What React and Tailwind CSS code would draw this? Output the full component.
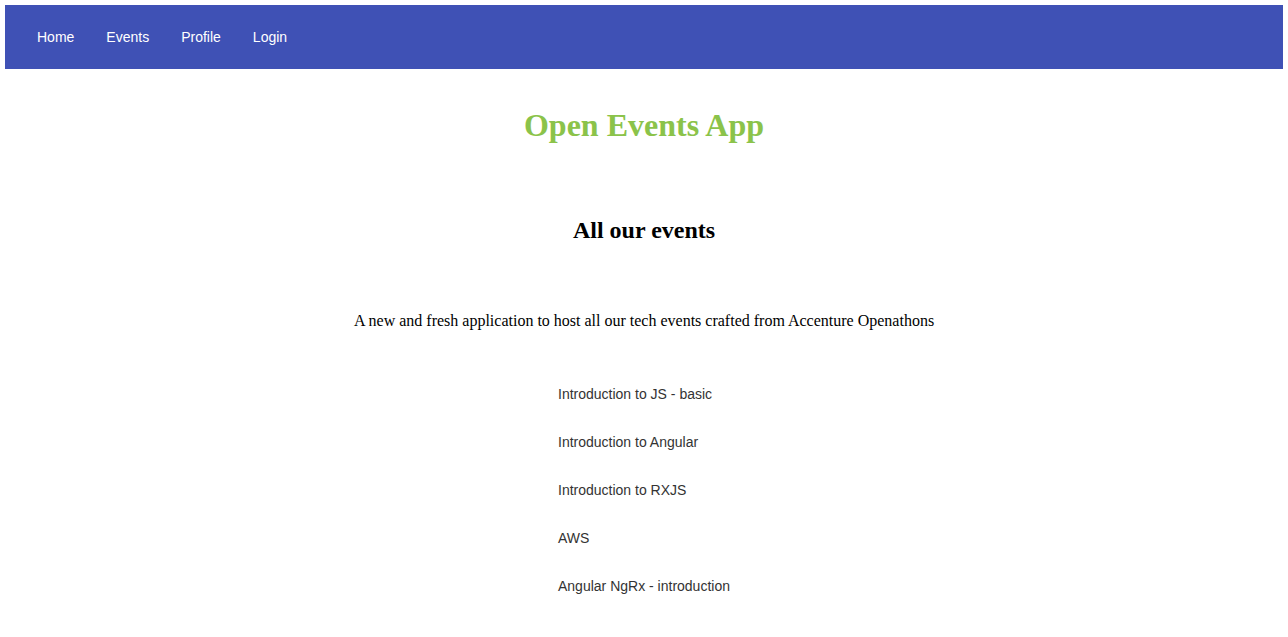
import React from "react";

const links = ["Home", "Events", "Profile", "Login"];
const events = [
  "Introduction to JS - basic",
  "Introduction to Angular",
  "Introduction to RXJS",
  "AWS",
  "Angular NgRx - introduction",
];

export default function App() {
  return (
    <div className="min-h-screen bg-white p-[5px]">
      <nav className="h-16 bg-[#3f51b5] flex items-center px-4 font-['Liberation_Sans',Arial,sans-serif]">
        {links.map((l) => (
          <a key={l} className="px-4 text-[14px] leading-4 text-white cursor-pointer">
            {l}
          </a>
        ))}
      </nav>

      <main className="flex flex-col items-center font-['Liberation_Serif','Times_New_Roman',serif] text-black">
        <h1 className="mt-[38px] text-[32px] leading-[37px] font-bold text-[#8bc34a]">Open Events App</h1>
        <h2 className="mt-[72px] text-[24px] leading-[28px] font-bold">All our events</h2>
        <p className="mt-[68px] text-[16px] leading-[18px]">
          A new and fresh application to host all our tech events crafted from Accenture Openathons
        </p>
        <ul className="mt-[56px] flex flex-col gap-8 font-['Liberation_Sans',Arial,sans-serif] text-[14px] leading-4 text-[#333]">
          {events.map((e) => (
            <li key={e}>{e}</li>
          ))}
        </ul>
      </main>
    </div>
  );
}
